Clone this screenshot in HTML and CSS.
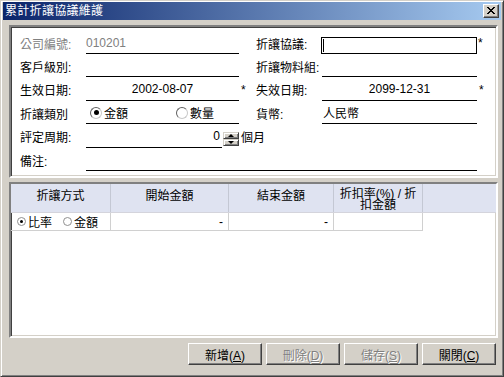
FILE: index.html
```html
<!DOCTYPE html>
<html>
<head>
<meta charset="utf-8">
<link rel="stylesheet" href="styles.css">
</head>
<body>
<div class="window">
  <div class="titlebar">
    <span class="title">累計折讓協議維護</span>
    <span class="close-btn"><svg width="8" height="7" viewBox="0 0 8 7" shape-rendering="crispEdges"><path d="M0 0h2v1h1v1h2v-1h1v-1h2v1h-1v1h-1v1h-1v1h1v1h1v1h1v1h-2v-1h-1v-1h-2v1h-1v1h-2v-1h1v-1h1v-1h1v-1h-1v-1h-1v-1h-1z" fill="#000"/></svg></span>
  </div>
  <div class="content">
    <div class="panel form">
      <span class="label disabled">公司編號:</span>
      <span class="field disabled">010201</span>
      <span class="star"></span>
      <span class="label">折讓協議:</span>
      <span class="input"><span class="caret"></span></span>
      <span class="star top">*</span>

      <span class="label">客戶級別:</span>
      <span class="field"></span>
      <span class="star"></span>
      <span class="label">折讓物料組:</span>
      <span class="field"></span>
      <span class="star"></span>

      <span class="label">生效日期:</span>
      <span class="field center">2002-08-07</span>
      <span class="star">*</span>
      <span class="label">失效日期:</span>
      <span class="field center">2099-12-31</span>
      <span class="star">*</span>

      <span class="label">折讓類別</span>
      <span class="field radios">
        <span class="radio-item"><span class="radio checked"></span>金額</span>
        <span class="radio-item second"><span class="radio"></span>數量</span>
      </span>
      <span class="star"></span>
      <span class="label">貨幣:</span>
      <span class="field pad">人民幣</span>
      <span class="star"></span>

      <span class="label">評定周期:</span>
      <span class="spin-wrap">
        <span class="field num">0</span>
        <span class="spinner">
          <span class="spin-btn"><span class="arrow-up"></span></span>
          <span class="spin-btn"><span class="arrow-down"></span></span>
        </span>
      </span>
      <span class="unit">個月</span>

      <span class="label">備注:</span>
      <span class="field wide"></span>
    </div>

    <div class="panel grid">
      <div class="grid-head">
        <div class="hcell c1"><span>折讓方式</span></div>
        <div class="hcell c2"><span>開始金額</span></div>
        <div class="hcell c3"><span>結束金額</span></div>
        <div class="hcell c4"><span>折扣率(%) / 折扣金額</span></div>
      </div>
      <div class="grid-row">
        <div class="cell c1">
          <span class="gradio checked"></span><span class="gtext">比率</span>
          <span class="gradio second"></span><span class="gtext">金額</span>
        </div>
        <div class="cell c2 num">-</div>
        <div class="cell c3 num">-</div>
        <div class="cell c4"></div>
      </div>
    </div>

    <div class="buttons">
      <button class="btn">新增(<u>A</u>)</button>
      <button class="btn disabled">刪除(<u>D</u>)</button>
      <button class="btn disabled">儲存(<u>S</u>)</button>
      <button class="btn">關閉(<u>C</u>)</button>
    </div>
  </div>
</div>
</body>
</html>
```

FILE: styles.css
```css
* { box-sizing: border-box; }
html, body { margin: 0; padding: 0; }
body {
  width: 504px;
  height: 377px;
  overflow: hidden;
  background: #d4d0c8;
  font-family: "Liberation Sans", "Noto Sans CJK TC", sans-serif;
  font-size: 12px;
  color: #000;
}
.window {
  width: 504px;
  height: 377px;
  border: 1px solid;
  border-color: #d4d0c8 #404040 #404040 #d4d0c8;
  box-shadow: inset 1px 1px #fff, inset -1px -1px #808080;
  padding: 1px 2px 2px 2px;
  display: flex;
  flex-direction: column;
}
.titlebar {
  height: 18px;
  background: linear-gradient(to right, #0a246a, #a6caf0);
  display: flex;
  align-items: center;
  justify-content: space-between;
  padding: 0 2px 0 2px;
}
.title {
  color: #fff;
  font-size: 12px;
  letter-spacing: 0.3px;
  line-height: 16px;
}
.close-btn {
  width: 16px;
  height: 14px;
  background: #d4d0c8;
  border: 1px solid;
  border-color: #fff #404040 #404040 #fff;
  box-shadow: inset -1px -1px #808080;
  display: flex;
  align-items: center;
  justify-content: center;
  padding: 0 1px 1px 0;
}
.close-btn svg { display: block; }

.content {
  flex: 1;
  display: flex;
  flex-direction: column;
  padding: 5px 3px 0 6px;
}
.panel {
  background: #fff;
  border: 2px solid;
  border-color: #808080 #fff #fff #808080;
  box-shadow: inset 1px 1px #404040, inset -1px -1px #d4d0c8;
}

/* form */
.form {
  height: 153px;
  display: grid;
  grid-template-columns: 66px 153px 17px 66px 155px 1fr;
  grid-template-rows: 23px 23px 24px 23px 24px 23px;
  padding: 4px 0 5px 9px;
}
.label {
  display: flex;
  align-items: center;
  padding-top: 1px;
  white-space: nowrap;
}
.disabled { color: #808080; }
.field {
  border-bottom: 1px solid #000;
  display: flex;
  align-items: center;
  padding-top: 1px;
  white-space: nowrap;
}
.field.center { justify-content: center; }
.field.pad { padding-left: 1px; }
.field.wide { grid-column: 2 / 6; }
.star {
  display: flex;
  align-items: center;
  padding-left: 2px;
  padding-top: 2px;
}
.star.top { align-items: flex-start; padding-left: 1px; padding-top: 5px; }
.input {
  margin: 6px 0 0 -1px;
  border: 1px solid #000;
  display: flex;
  align-items: center;
  padding-left: 1px;
}
.caret {
  width: 1px;
  height: 13px;
  background: #000;
}
.radios { padding-left: 4px; }
.radio-item {
  display: flex;
  align-items: center;
}
.radio-item.second { margin-left: 48px; }
.radio {
  width: 12px;
  height: 12px;
  border-radius: 50%;
  border: 1px solid;
  border-color: #606060 #c8c8c8 #c8c8c8 #606060;
  margin-right: 2px;
  display: flex;
  align-items: center;
  justify-content: center;
}
.radio.checked::after {
  content: "";
  width: 5px;
  height: 5px;
  border-radius: 50%;
  background: #000;
}
.spin-wrap {
  display: flex;
  align-items: stretch;
}
.spin-wrap .field {
  flex: 1;
}
.field.num {
  justify-content: flex-end;
  padding-right: 2px;
}
.spinner {
  align-self: flex-end;
  width: 16px;
  height: 14px;
  margin: 0 0 2px 1px;
  display: flex;
  flex-direction: column;
}
.spin-btn {
  flex: 1;
  background: #d4d0c8;
  border: 1px solid;
  border-color: #d4d0c8 #404040 #404040 #d4d0c8;
  box-shadow: inset 1px 1px #fff, inset -1px -1px #808080;
  display: flex;
  align-items: center;
  justify-content: center;
}
.arrow-up, .arrow-down {
  width: 0;
  height: 0;
  border-left: 3px solid transparent;
  border-right: 3px solid transparent;
}
.arrow-up { border-bottom: 3px solid #000; }
.arrow-down { border-top: 3px solid #000; }
.unit {
  grid-column: 3 / -1;
  display: flex;
  align-items: center;
  padding-left: 2px;
  padding-top: 1px;
}

/* grid */
.grid {
  margin-top: 4px;
  height: 156px;
  padding: 0;
}
.grid-head {
  height: 29px;
  background: #dfe3f1;
  display: flex;
  border-bottom: 1px solid #d4d4dc;
}
.hcell {
  border-right: 1px solid #c4c8d4;
  display: flex;
  align-items: center;
  justify-content: center;
  text-align: center;
  overflow: hidden;
  line-height: 16px;
  padding-bottom: 5px;
}
.c1 { width: 100px; }
.c2 { width: 118px; }
.c3 { width: 105px; }
.c4 { width: 89px; }
.hcell.c4 {
  align-items: flex-start;
  line-height: 11px;
  padding: 5px 3px 0 3px;
}
.grid-row {
  height: 18px;
  display: flex;
}
.cell {
  border-right: 1px solid #d0d0d0;
  border-bottom: 1px solid #d0d0d0;
  display: flex;
  align-items: center;
}
.cell.num {
  justify-content: flex-end;
  padding-right: 5px;
}
.cell.c1 { padding-left: 6px; }
.gradio {
  width: 9px;
  height: 9px;
  border-radius: 50%;
  border: 1px solid #909090;
  display: flex;
  align-items: center;
  justify-content: center;
  margin-right: 2px;
}
.gradio.second { margin-left: 11px; }
.gradio.checked::after {
  content: "";
  width: 3px;
  height: 3px;
  border-radius: 50%;
  background: #000;
}

/* buttons */
.buttons {
  display: flex;
  justify-content: flex-end;
  gap: 4px;
  margin-top: 5px;
  padding-right: 2px;
}
.btn {
  width: 74px;
  height: 22px;
  font-family: "Liberation Sans", "Noto Sans CJK TC", sans-serif;
  font-size: 12px;
  color: #000;
  background: #d4d0c8;
  border: 1px solid;
  border-color: #fff #404040 #404040 #fff;
  box-shadow: inset -1px -1px #808080;
  padding: 0;
}
.btn.disabled {
  color: #808080;
  text-shadow: 1px 1px #fff;
}
```
